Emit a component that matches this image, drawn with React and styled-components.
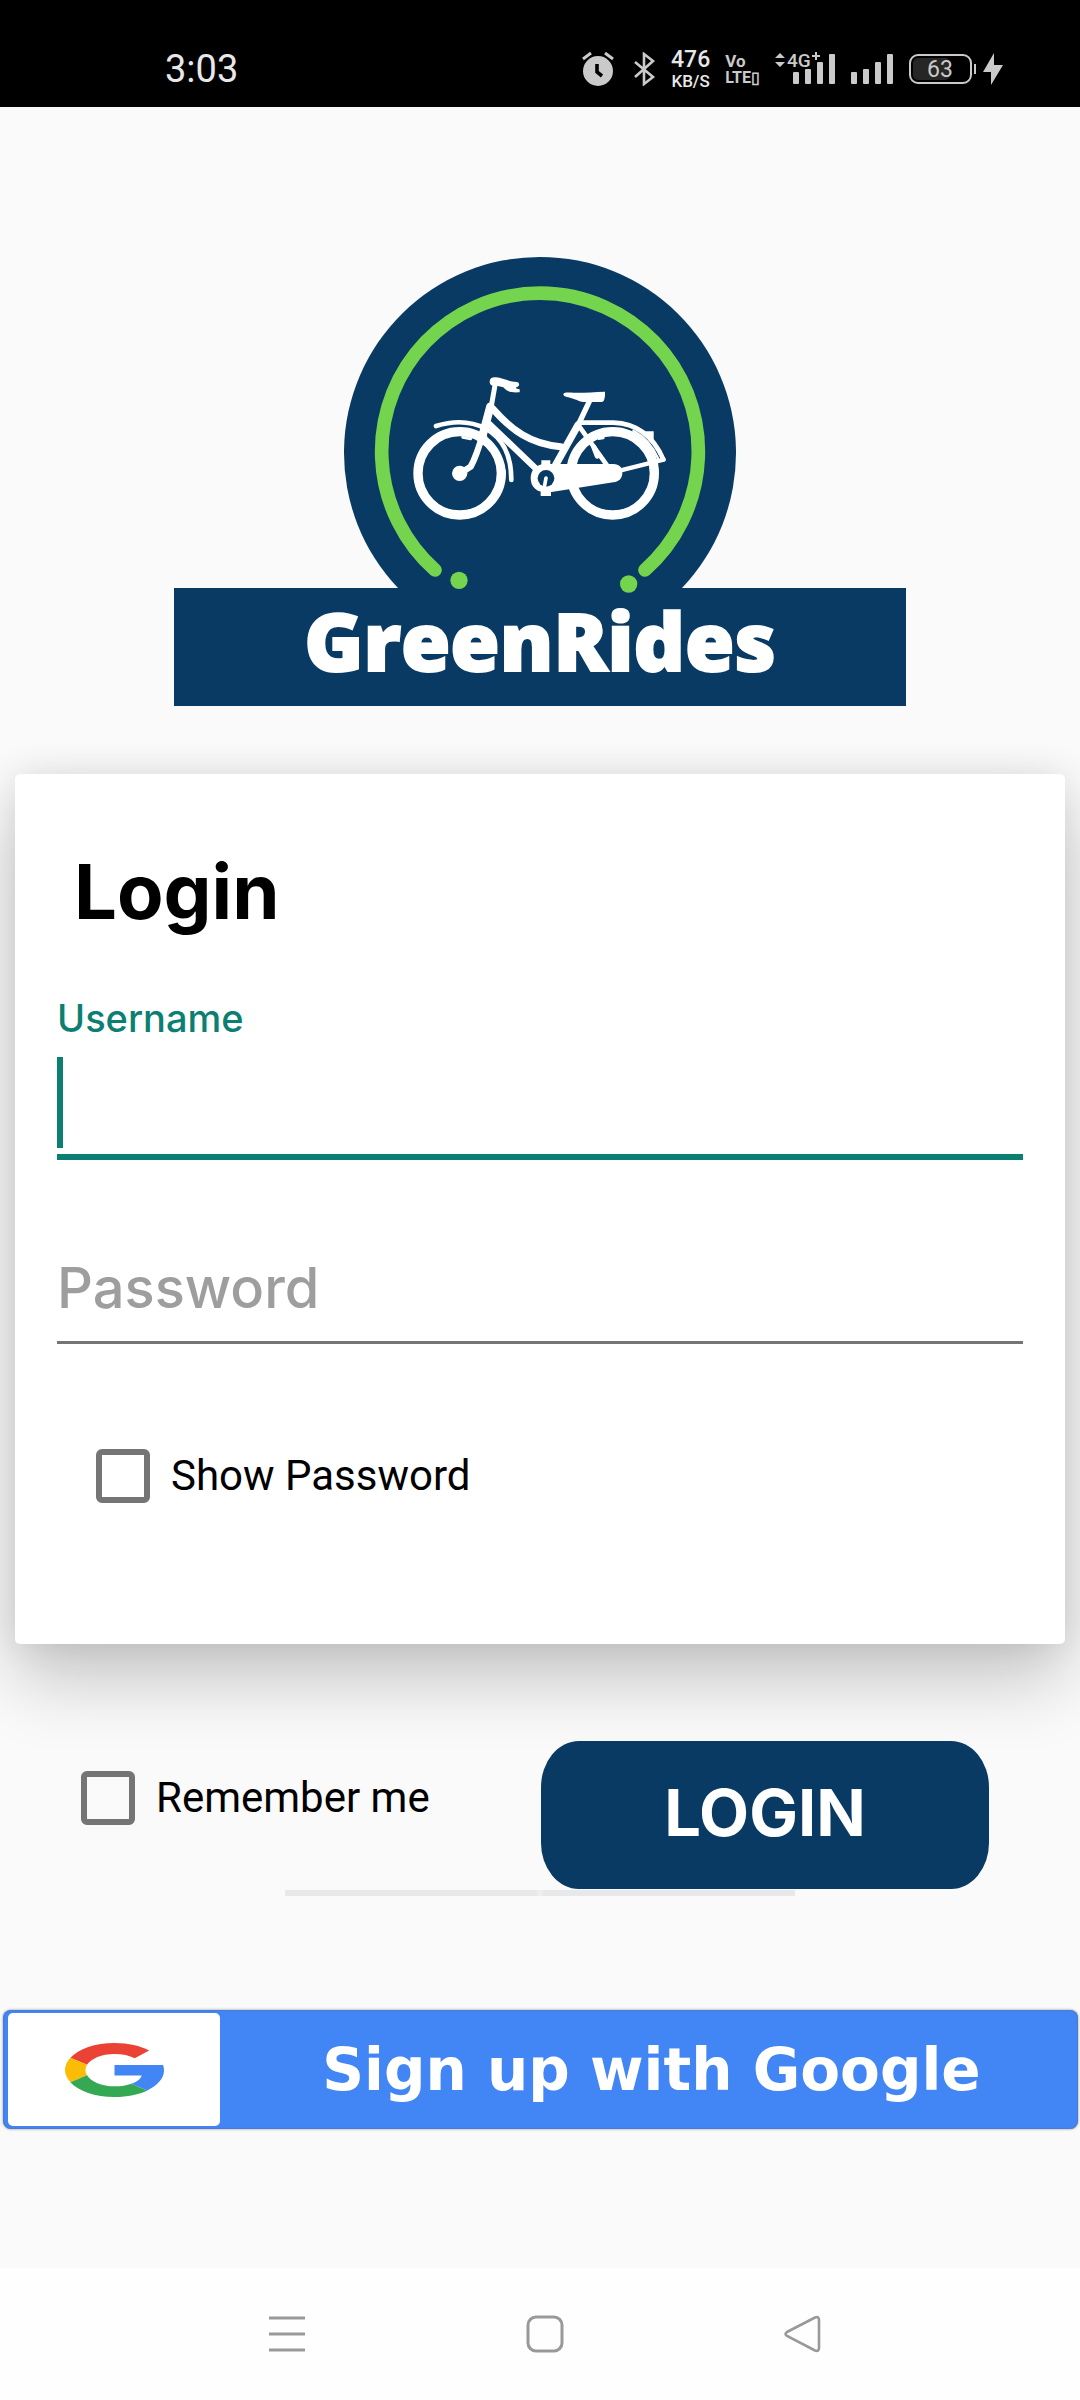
import React, { useState } from 'react';
import styled, { createGlobalStyle } from 'styled-components';

const NAVY = '#093a64';
const TEAL = '#0b8072';
const GREY = '#757575';

const GlobalStyle = createGlobalStyle`
  *, *::before, *::after { box-sizing: border-box; }
  body { margin: 0; background: #fafafa; }
  button, input { font: inherit; color: inherit; margin: 0; padding: 0; border: 0; background: none; }
`;

const Screen = styled.div`
  display: flex;
  flex-direction: column;
  min-height: 100vh;
  background: #fafafa;
  color: #000;
  font-family: Roboto, 'Liberation Sans', sans-serif;
  overflow-x: hidden;
`;

const StatusBar = styled.header`
  display: flex;
  align-items: center;
  justify-content: space-between;
  height: 107px;
  padding: 30px 77px 0 165px;
  background: #000;
  color: #e8e8e8;
`;

const Clock = styled.time`
  font-size: 38px;
  line-height: 44px;
`;

const StatusIcons = styled.div`
  display: flex;
  align-items: center;
  gap: ${(p) => p.$gap}px;
  color: #cacaca;

  svg { display: block; }
`;

const Stack = styled.div`
  display: flex;
  flex-direction: column;
  align-items: ${(p) => p.$align || 'center'};
  color: ${(p) => p.$color || 'inherit'};
  font-weight: ${(p) => p.$weight || 500};
`;

const Tiny = styled.span`
  font-size: ${(p) => p.$size}px;
  line-height: ${(p) => p.$line}px;
`;

const Main = styled.main`
  flex: 1;
  display: flex;
  flex-direction: column;
`;

const Brand = styled.div`
  display: flex;
  flex-direction: column;
  align-items: center;
  padding: 150px 16% 0;
`;

const Emblem = styled.svg`
  position: relative;
  z-index: 1;
  display: block;
  width: 392px;
  height: 331px;
  overflow: visible;
`;

const Banner = styled.h1`
  width: 100%;
  max-width: 732px;
  margin: 0;
  padding-bottom: 14px;
  background: ${NAVY};
  color: #fff;
  font-family: 'Open Sans', Lato, sans-serif;
  font-size: 80px;
  font-weight: 800;
  line-height: 104px;
  text-align: center;
  -webkit-text-stroke: 2px #fff;
  stroke-linejoin: round;
`;

const Card = styled.section`
  margin: 68px 15px 0;
  padding: 73px 42px 141px;
  border-radius: 5px;
  background: #fff;
  box-shadow: 0 38px 70px rgba(0, 0, 0, 0.2), 0 0 36px rgba(0, 0, 0, 0.1);
`;

const Title = styled.h2`
  margin: 0 0 61px;
  padding-left: 17px;
  font-family: Inter, sans-serif;
  font-size: 76px;
  font-weight: 700;
  line-height: 88px;
`;

const Field = styled.div`
  display: flex;
  flex-direction: column;
  margin-top: ${(p) => p.$top || 0}px;
  font-family: Inter, sans-serif;
  font-weight: 500;
`;

const FieldLabel = styled.label`
  margin-bottom: 17px;
  color: ${TEAL};
  font-size: 38px;
  line-height: 44px;
`;

const InputRow = styled.div`
  display: flex;
  padding-bottom: ${(p) => (p.$active ? 6 : 17)}px;
  border-bottom: ${(p) => (p.$active ? `6px solid ${TEAL}` : `3px solid ${GREY}`)};
`;

const Caret = styled.span`
  width: 6px;
  background: ${TEAL};
`;

const TextInput = styled.input`
  flex: 1;
  min-width: 0;
  height: ${(p) => p.$height}px;
  outline: 0;
  font-size: 56px;
  caret-color: ${TEAL};

  &::placeholder { color: #9e9e9e; opacity: 1; }
`;

const Check = styled.label`
  display: flex;
  align-items: center;
  gap: 21px;
  font-size: 42px;
  line-height: 54px;
`;

const CheckRow = styled.div`
  display: flex;
  padding: 105px 39px 0;
`;

const Tick = styled.input`
  appearance: none;
  width: 54px;
  height: 54px;
  border: 6px solid ${GREY};
  border-radius: 6px;

  &:checked { background: ${TEAL}; border-color: ${TEAL}; }
`;

const Actions = styled.div`
  display: flex;
  align-items: flex-start;
  justify-content: space-between;
  padding: 97px 91px 0 81px;

  ${Check} { padding-top: 30px; }
`;

const LoginButton = styled.button`
  width: 448px;
  height: 148px;
  padding-bottom: 6px;
  border-radius: 38px / 46px;
  background: ${NAVY};
  color: #fff;
  font-family: Inter, sans-serif;
  font-size: 65px;
  font-weight: 700;
  cursor: pointer;
`;

const Divider = styled.hr`
  display: block;
  width: 510px;
  height: 6px;
  margin: 1px auto 0;
  border: 0;
  background: linear-gradient(90deg, #e7e8e9 49%, #eff0f1 50%, #e7e8e9 51%);
`;

const GoogleButton = styled.button`
  display: flex;
  align-items: stretch;
  height: 119px;
  margin: 114px 2px 0 3px;
  padding: 3px 5px;
  border-radius: 8px;
  background: #4285f4;
  box-shadow: inset 0 0 2px #54699a, 0 0 3px rgba(0, 0, 0, 0.4);
  color: #fff;
  cursor: pointer;
`;

const GoogleMark = styled.span`
  display: flex;
  align-items: center;
  justify-content: center;
  width: 212px;
  border-radius: 5px;
  background: #fff;
`;

const GoogleText = styled.span`
  flex: 1;
  align-self: center;
  padding-left: 10px;
  font-family: 'DejaVu Sans', sans-serif;
  font-size: 58px;
  font-weight: 700;
  line-height: 64px;
  text-align: center;
  white-space: nowrap;
`;

const NavBar = styled.nav`
  display: flex;
  align-items: center;
  justify-content: space-between;
  height: 132px;
  padding: 0 250px 0 260px;
  background: #fefefe;
`;

const NavButton = styled.button`
  display: flex;
  padding: 8px;
  cursor: pointer;
`;

function AlarmIcon() {
  return (
    <svg width="32" height="34" viewBox="0 0 32 34" aria-hidden="true">
      <circle cx="16" cy="19" r="15" fill="currentColor" />
      <path d="M1 7l8-6M31 7l-8-6" stroke="currentColor" strokeWidth="3" />
      <path d="M15 12v8l5 4" fill="none" stroke="#000" strokeWidth="3.6" />
    </svg>
  );
}

function BluetoothIcon() {
  return (
    <svg width="22" height="34" viewBox="0 0 22 34" aria-hidden="true">
      <path d="M1 10l18 15-9 7V2l9 7L1 25" fill="none" stroke="currentColor" strokeWidth="2.6" />
    </svg>
  );
}

function Bars({ x = 0 }) {
  return (
    <g fill="currentColor">
      <rect x={x} y="20" width="6" height="12" rx="1" />
      <rect x={x + 12} y="17" width="6" height="15" rx="1" />
      <rect x={x + 24} y="10" width="6" height="22" rx="1" />
      <rect x={x + 36} y="2" width="6" height="30" rx="1" />
    </g>
  );
}

function MobileSignal() {
  return (
    <svg width="61" height="46" viewBox="0 -6 61 46" aria-hidden="true">
      <path d="M0 6l5-5 5 5zM0 10l5 5 5-5z" fill="currentColor" />
      <Bars x={18} />
      <text x="12" y="15" fontSize="19" fontWeight="500" fill="currentColor" stroke="#000" strokeWidth="3" paintOrder="stroke">4G</text>
      <path d="M37 4h8M41 0v8" stroke="currentColor" strokeWidth="2" />
    </svg>
  );
}

function Signal() {
  return (
    <svg width="43" height="34" viewBox="0 0 43 34" aria-hidden="true">
      <Bars />
    </svg>
  );
}

function Battery() {
  return (
    <svg width="67" height="32" viewBox="0 0 67 32" aria-hidden="true">
      <rect x="1" y="2" width="61" height="28" rx="8" fill="none" stroke="currentColor" strokeWidth="2" />
      <rect x="4" y="5" width="37" height="22" rx="5" fill="#262626" />
      <path d="M66 11v10" stroke="currentColor" strokeWidth="2" />
      <text x="31" y="24" fontSize="23" fill="currentColor" textAnchor="middle">63</text>
    </svg>
  );
}

function Bolt() {
  return (
    <svg width="20" height="32" viewBox="0 0 20 32" aria-hidden="true">
      <path d="M11 0L0 19h8v13l12-20h-9z" fill="currentColor" />
    </svg>
  );
}

function BikeEmblem() {
  return (
    <Emblem viewBox="72 51 1176 993" aria-hidden="true">
      <path d="M234 1044A588 588 0 1 1 1086 1044Z" fill={NAVY} />
      <path d="M345 990A475 475 0 1 1 975 990" fill="none" stroke="#74d44d" strokeWidth="41" strokeLinecap="round" />
      <circle cx="417" cy="1021" r="26" fill="#74d44d" />
      <circle cx="926" cy="1032" r="26" fill="#74d44d" />
      <g fill="none" stroke="#fff" strokeLinecap="round" strokeLinejoin="round">
        <circle cx="419" cy="700" r="125" strokeWidth="28" />
        <circle cx="878" cy="700" r="125" strokeWidth="28" />
        <path d="M348 558C400 542 455 544 498 566C548 594 574 646 574 720" strokeWidth="14" />
        <path d="M504 590C538 618 554 650 560 690" strokeWidth="5" stroke={NAVY} />
        <path d="M778 548H880C950 550 1000 590 1030 658" strokeWidth="14" />
        <path d="M940 572C975 590 998 618 1014 655" strokeWidth="7" />
        <path d="M1031 659L890 694" strokeWidth="13" />
        <path d="M526 430L514 498" strokeWidth="15" />
        <path d="M511 500L488 585" strokeWidth="25" />
        <path d="M489 580C476 625 466 655 452 680L424 698" strokeWidth="19" />
        <path d="M520 508C575 570 630 612 722 620" strokeWidth="21" />
        <path d="M508 552L652 690" strokeWidth="19" />
        <path d="M808 484L776 552" strokeWidth="16" />
        <path d="M774 555L704 680" strokeWidth="22" />
        <path d="M782 565L868 686" strokeWidth="14" />
        <path d="M822 622L832 648" strokeWidth="16" />
        <path d="M428 592L452 597M836 596L850 594" strokeWidth="8" />
      </g>
      <g fill="#fff">
        <circle cx="419" cy="700" r="23" />
        <path d="M509 426C509 415 516 411 528 412C548 413 562 424 590 426C600 427 600 440 590 441C584 447 594 446 599 448V457C575 459 560 455 550 442L530 437C518 440 509 435 509 426Z" />
        <path d="M730 462C733 456 745 457 760 458C790 459 820 456 855 455C856 470 853 486 845 486H800C775 486 772 478 750 473C735 470 730 468 730 462Z" />
        <path d="M974 574H1001V612Z" />
        <path d="M676 672H880C898 672 907 684 907 698C907 714 898 724 880 727L690 757C655 760 632 745 632 714C632 688 650 672 676 672Z" />
        <path d="M664 661H691V675H664ZM662 752H693V768H662Z" />
      </g>
      <circle cx="678" cy="715" r="25" fill={NAVY} />
      <path d="M678 714L671 752" stroke="#fff" strokeWidth="11" strokeLinecap="round" />
    </Emblem>
  );
}

function GoogleLogo() {
  return (
    <svg width="99" height="54" viewBox="2 2 44 44" preserveAspectRatio="none" aria-hidden="true">
      <path fill="#EA4335" d="M24 11c3.500 0 6.600 1.200 9 3.500l6.400-6.400C35.500 4.400 30.200 2 24 2 15.400 2 8 6.900 4.400 14.100l7.400 5.700C13.600 14.700 18.300 11 24 11z" />
      <path fill="#FBBC05" d="M11.800 28.300c-.5-1.400-.7-2.800-.7-4.300s.3-2.900.7-4.300l-7.400-5.600C2.900 17.100 2 20.400 2 24s.9 6.900 2.400 9.900z" />
      <path fill="#34A853" d="M24 46c5.900 0 10.900-2 14.600-5.300l-7.100-5.500c-2 1.300-4.500 2.100-7.500 2.100-5.700 0-10.500-3.900-12.200-9.100l-7.400 5.700C8 41.100 15.400 46 24 46z" />
      <path fill="#4285F4" d="M45.600 20H24v8.500h12.100c-.5 2.800-2.100 5.200-4.600 6.700l7.100 5.500C42.800 36.800 46 31.200 46 24.500c0-1.500-.1-3-.4-4.500z" />
    </svg>
  );
}

export default function App() {
  const [showPassword, setShowPassword] = useState(false);

  return (
    <Screen>
      <GlobalStyle />
      <StatusBar>
        <Clock>3:03</Clock>
        <StatusIcons $gap={15}>
          <StatusIcons $gap={20}>
            <AlarmIcon />
            <BluetoothIcon />
          </StatusIcons>
          <Stack $color="#e8e8e8">
            <Tiny $size={23} $line={24}>476</Tiny>
            <Tiny $size={17} $line={18}>KB/S</Tiny>
          </Stack>
          <Stack $align="flex-start" $weight={700}>
            <Tiny $size={17} $line={18}>Vo</Tiny>
            <Tiny $size={16} $line={16}>LTE▯</Tiny>
          </Stack>
          <MobileSignal />
          <Signal />
          <StatusIcons $gap={7}>
            <Battery />
            <Bolt />
          </StatusIcons>
        </StatusIcons>
      </StatusBar>

      <Main>
        <Brand>
          <BikeEmblem />
          <Banner>GreenRides</Banner>
        </Brand>

        <Card>
          <Title>Login</Title>
          <Field>
            <FieldLabel htmlFor="username">Username</FieldLabel>
            <InputRow $active>
              <Caret />
              <TextInput id="username" type="text" $height={91} autoComplete="username" />
            </InputRow>
          </Field>
          <Field $top={92}>
            <InputRow>
              <TextInput
                type={showPassword ? 'text' : 'password'}
                placeholder="Password"
                aria-label="Password"
                $height={72}
              />
            </InputRow>
          </Field>
          <CheckRow>
            <Check>
              <Tick
                type="checkbox"
                checked={showPassword}
                onChange={(e) => setShowPassword(e.target.checked)}
              />
              Show Password
            </Check>
          </CheckRow>
        </Card>

        <Actions>
          <Check>
            <Tick type="checkbox" />
            Remember me
          </Check>
          <LoginButton type="button">LOGIN</LoginButton>
        </Actions>
        <Divider />

        <GoogleButton type="button">
          <GoogleMark><GoogleLogo /></GoogleMark>
          <GoogleText>Sign up with Google</GoogleText>
        </GoogleButton>
      </Main>

      <NavBar>
        <NavButton type="button" aria-label="Recent apps">
          <svg width="38" height="38" viewBox="0 0 38 38">
            <path d="M1 3h36M1 19h36M1 35h36" stroke="#999" strokeWidth="3" />
          </svg>
        </NavButton>
        <NavButton type="button" aria-label="Home">
          <svg width="38" height="38" viewBox="0 0 38 38">
            <rect x="2" y="2" width="34" height="34" rx="8" fill="none" stroke="#999" strokeWidth="3" />
          </svg>
        </NavButton>
        <NavButton type="button" aria-label="Back">
          <svg width="38" height="38" viewBox="0 0 38 38">
            <path d="M3 17L31 2.500Q35 1 35 5V33Q35 37 31 35.500L3 21Q0 19 3 17Z" fill="none" stroke="#999" strokeWidth="2.600" />
          </svg>
        </NavButton>
      </NavBar>
    </Screen>
  );
}
